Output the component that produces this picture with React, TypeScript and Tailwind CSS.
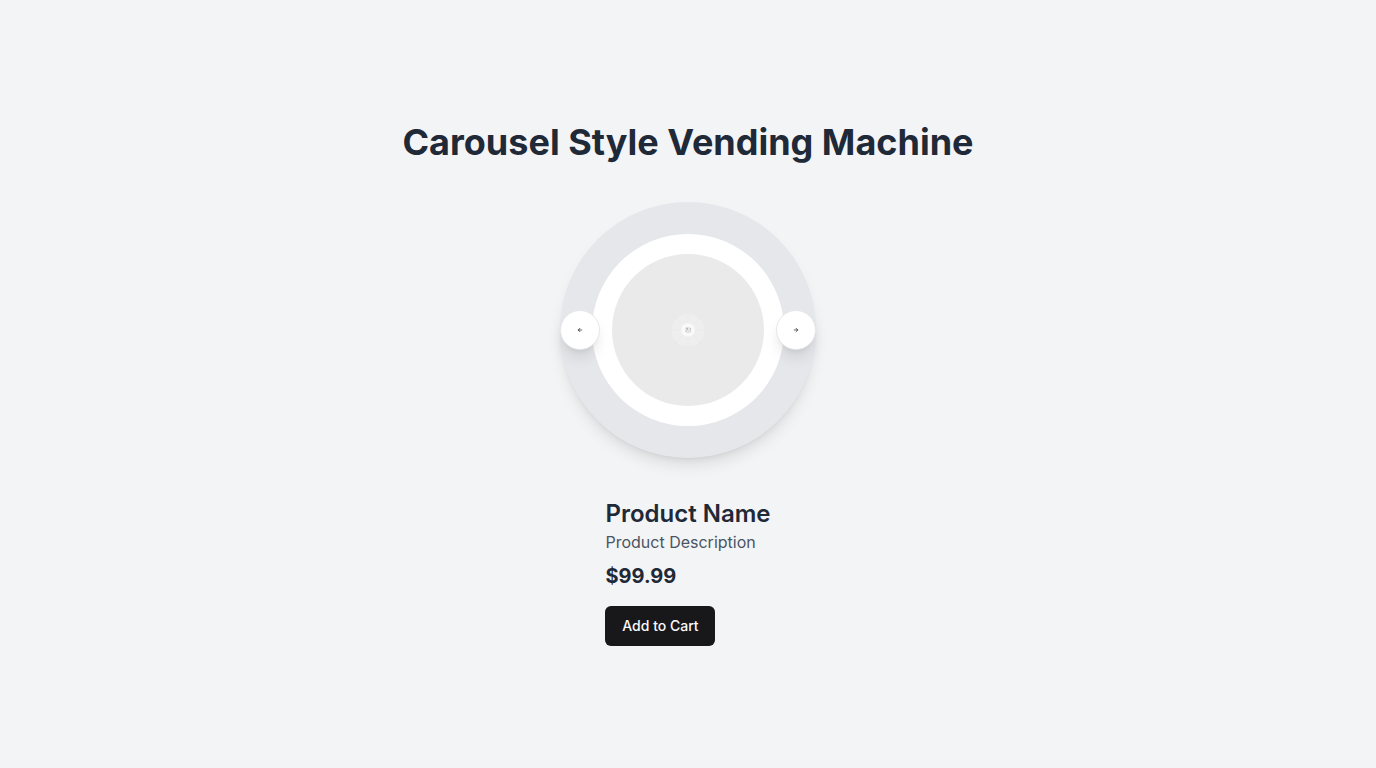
import { ArrowLeft, ArrowRight } from "lucide-react";

const navButton =
  "absolute top-1/2 flex size-10 -translate-y-1/2 items-center justify-center rounded-full border border-[#e5e7eb] bg-white text-[#09090b] shadow-lg";

function Placeholder() {
  return (
    <svg viewBox="0 0 152 152" className="size-38 rounded-full" role="img" aria-label="Product">
      <rect width="152" height="152" fill="#eaeaea" />
      <circle cx="76" cy="76" r="16.5" fill="#fafafa" opacity="0.25" />
      <g fill="none" stroke="#dedede" strokeWidth="0.25">
        <path d="M62 62l28 28M90 62L62 90M60 76h32M76 60v32" />
      </g>
      <circle cx="76" cy="76" r="6.8" fill="#f9f9f9" />
      <g fill="none" stroke="#777777" strokeWidth="0.3" strokeLinejoin="round" strokeLinecap="round">
        <rect x="74" y="74" width="4.4" height="4" rx="0.4" />
        <path d="M74 77.2l1.5-1.4 1 .8 1.9-1.8" />
        <circle cx="75.3" cy="75" r="0.3" />
      </g>
    </svg>
  );
}

export default function App() {
  return (
    <main className="flex min-h-screen flex-col items-center justify-center bg-[#f3f4f6] font-['Inter',sans-serif]">
      <h1 className="mb-10 text-4xl font-bold text-[#1f2937]">Carousel Style Vending Machine</h1>
      <div className="relative flex size-64 items-center justify-center rounded-full bg-[#e5e7eb] shadow-lg">
        <div className="flex size-48 items-center justify-center rounded-full bg-white">
          <Placeholder />
        </div>
        <button type="button" aria-label="Previous product" className={`${navButton} left-0`}>
          <ArrowLeft className="size-1.5" strokeWidth={2.5} />
        </button>
        <button type="button" aria-label="Next product" className={`${navButton} right-0`}>
          <ArrowRight className="size-1.5" strokeWidth={2.5} />
        </button>
      </div>
      <section className="mt-10">
        <h2 className="text-2xl font-semibold text-[#1f2937]">Product Name</h2>
        <p className="text-[#4b5563]">Product Description</p>
        <p className="mt-2 text-xl font-bold text-[#1f2937]">$99.99</p>
        <button
          type="button"
          className="mt-4 h-10 min-w-[110px] rounded-md bg-[#18181a] px-4 text-sm font-medium text-[#fafafa]"
        >
          Add to Cart
        </button>
      </section>
    </main>
  );
}
